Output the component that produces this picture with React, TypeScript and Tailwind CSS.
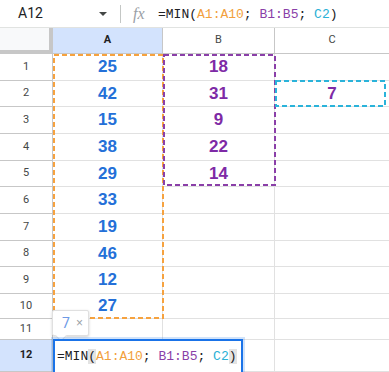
import React from 'react';

const colA = [25, 42, 15, 38, 29, 33, 19, 46, 12, 27];
const colB = [18, 31, 9, 22, 14];
const rowHeights = [27, 26, 27, 27, 26, 27, 27, 26, 27, 25, 21, 32];

const mono = { fontFamily: '"Liberation Mono", "DejaVu Sans Mono", monospace' };

const Formula: React.FC<{ highlightParens?: boolean }> = ({ highlightParens }) => (
    <span style={mono}>
        <span className="text-[#202124]">=MIN</span>
        <span className={highlightParens ? 'text-[#202124] bg-[#e3e3e3]' : 'text-[#202124]'}>(</span>
        <span className="text-[#f29f3d]">A1:A10</span>
        <span className="text-[#202124]">; </span>
        <span className="text-[#8a3fa8]">B1:B5</span>
        <span className="text-[#202124]">; </span>
        <span className="text-[#2bb1d6]">C2</span>
        <span className={highlightParens ? 'text-[#202124] bg-[#e3e3e3]' : 'text-[#202124]'}>)</span>
    </span>
);

const DashedBox: React.FC<{ x: number; y: number; w: number; h: number; color: string }> = ({ x, y, w, h, color }) => (
    <svg className="absolute pointer-events-none" style={{ left: x, top: y }} width={w} height={h}>
        <rect x={1} y={1} width={w - 2} height={h - 2} fill="none" stroke={color} strokeWidth={2} strokeDasharray="5 3" />
    </svg>
);

export default function App() {
    return (
        <div className="relative w-[389px] h-[372px] overflow-hidden bg-white" style={{ fontFamily: '"Liberation Sans", Arial, sans-serif' }}>
            {/* formula bar */}
            <div className="h-[28px] flex items-center border-b border-[#e1e3e1]">
                <div className="w-[92px] pl-[18px] text-[14px] text-[#202124]" style={{ fontFamily: 'Roboto, sans-serif' }}>A12</div>
                <div className="w-[22px] flex justify-center">
                    <div className="w-0 h-0 border-l-[4px] border-r-[4px] border-t-[4px] border-l-transparent border-r-transparent border-t-[#444746]" />
                </div>
                <div className="w-px h-[18px] bg-[#c4c7c5] ml-[6px]" />
                <div className="w-[37px] pl-[12px] text-[16px] italic text-[#9aa0a6]" style={{ fontFamily: '"Liberation Serif", serif' }}>fx</div>
                <div className="text-[13px] leading-none">
                    <Formula />
                </div>
            </div>

            {/* grid */}
            <div className="grid grid-cols-[53px_110px_112px_1fr]" style={{ fontFamily: 'Roboto, sans-serif' }}>
                <div className="h-[26px] bg-[#f8f9fa] border-r-[4px] border-b-[4px] border-[#c7c7c7]" />
                <div className="h-[26px] bg-[#d3e3fd] border-b border-r border-[#c7c7c7] flex items-center justify-center text-[11px] font-bold text-[#1f1f1f]">A</div>
                <div className="h-[26px] border-b border-r border-[#c7c7c7] flex items-center justify-center text-[11px] text-[#444746]">B</div>
                <div className="h-[26px] border-b border-[#c7c7c7] flex items-center justify-center text-[11px] text-[#444746]">C</div>

                {rowHeights.map((h, i) => {
                    const last = i === 11;
                    return (
                        <React.Fragment key={i}>
                            <div
                                className={`flex items-center justify-center text-[11px] border-r border-b border-[#c7c7c7] ${last ? 'bg-[#d3e3fd] font-bold text-[#1f1f1f]' : 'text-[#444746]'}`}
                                style={{ height: h }}
                            >
                                {i + 1}
                            </div>
                            <div className="flex items-center justify-center border-r border-b border-[#e1e1e1] text-[17px] font-bold text-[#2470d8]" style={{ height: h, fontFamily: '"Liberation Sans", Arial, sans-serif' }}>
                                {colA[i] ?? ''}
                            </div>
                            <div className="flex items-center justify-center border-r border-b border-[#e1e1e1] text-[17px] font-bold text-[#7e2aa6]" style={{ height: h, fontFamily: '"Liberation Sans", Arial, sans-serif' }}>
                                {colB[i] ?? ''}
                            </div>
                            <div className="flex items-center justify-center border-b border-[#e1e1e1] text-[17px] font-bold text-[#7e2aa6]" style={{ height: h, fontFamily: '"Liberation Sans", Arial, sans-serif' }}>
                                {i === 1 ? 7 : ''}
                            </div>
                        </React.Fragment>
                    );
                })}
            </div>

            {/* range highlights */}
            <DashedBox x={53} y={54} w={111} h={265} color="#f6a23f" />
            <DashedBox x={163} y={54} w={113} h={132} color="#8a3fa8" />
            <DashedBox x={275} y={80} w={111} h={27} color="#2ab3da" />

            {/* result tooltip */}
            <div className="absolute left-[52px] top-[310px] w-[37px] h-[26px] bg-white border border-[#e0e0e0] rounded-[2px] shadow-[0_1px_3px_rgba(0,0,0,0.18)] flex items-center gap-[6px] pl-[9px]">
                <span className="text-[14px] text-[#6d99e6]" style={{ fontFamily: 'Roboto, sans-serif' }}>7</span>
                <span className="text-[12px] text-[#9aa0a6]">×</span>
                <div className="absolute left-[4px] bottom-[-5px] w-[8px] h-[8px] bg-white border-r border-b border-[#e0e0e0] rotate-45" />
            </div>

            {/* cell editor */}
            <div className="absolute left-[53px] top-[339px] w-[190px] h-[40px] border-2 border-[#1a73e8] bg-white shadow-[0_0_0_2px_rgba(26,115,232,0.2)] flex items-start pt-[6px] pl-[2px]">
                <div className="text-[13px] leading-[18px]">
                    <Formula highlightParens />
                </div>
            </div>
        </div>
    );
}
